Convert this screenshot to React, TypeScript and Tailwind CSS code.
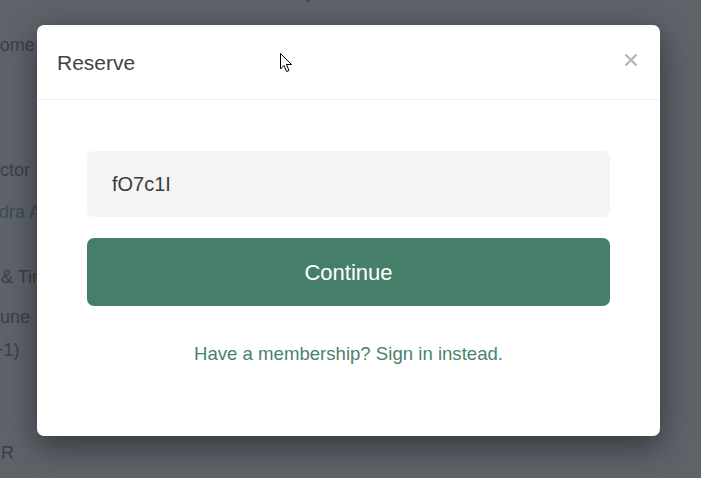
import React from "react";

export default function App() {
  const font = { fontFamily: '"Liberation Sans", Arial, sans-serif' };
  return (
    <div
      className="relative w-[701px] h-[478px] overflow-hidden bg-[#5e6269]"
      style={font}
    >
      {/* dimmed page behind the modal */}
      <div className="flex flex-col text-[18px] leading-[22px] text-[#3b3f44]">
        <div className="mt-[-19px] ml-[296px] h-[22px]">by</div>
        <div className="mt-[31px] ml-[-40px]">Welcome</div>
        <div className="mt-[103px] ml-[-45px]">Instructor</div>
        <div className="mt-[20px] ml-[-56px] text-[#3c4f51]">Alexandra A</div>
        <div className="mt-[43px] ml-[-42px]">Date &amp; Time</div>
        <div className="mt-[18px] ml-[-9px]">June</div>
        <div className="mt-[11px] ml-[-13px]">(+1)</div>
        <div className="mt-[81px] ml-[-24px]">EUR</div>
      </div>

      {/* modal */}
      <div className="absolute left-[37px] top-[25px] w-[623px] h-[411px] bg-white rounded-[7px] shadow-[0_10px_30px_rgba(0,0,0,0.45)] flex flex-col">
        <div className="h-[75px] flex items-center justify-between pl-[20px] pr-[22px] border-b border-[#eef1f5]">
          <span className="text-[21px] text-[#3e4248] mt-[1px]">Reserve</span>
          <svg width="14" height="14" viewBox="0 0 14 14" className="mt-[-4px]">
            <path d="M1.5 1.5 L12.5 12.5 M12.5 1.5 L1.5 12.5" stroke="#b2b8bf" strokeWidth="2.4" strokeLinecap="butt" />
          </svg>
        </div>
        <div className="flex flex-col px-[50px] pt-[51px]">
          <div className="h-[66px] rounded-[7px] bg-[#f4f4f4] flex items-center pl-[25px] text-[20px] text-[#3c3c3c]">
            fO7c1I
          </div>
          <button className="mt-[21px] h-[68px] rounded-[7px] bg-[#457f69] text-white text-[22px] flex items-center justify-center">
            Continue
          </button>
          <div className="mt-[34px] text-center text-[18.6px] text-[#4a836d]">
            Have a membership? Sign in instead.
          </div>
        </div>
      </div>

      {/* mouse cursor */}
      <svg
        className="absolute left-[280px] top-[53px]"
        width="13"
        height="20"
        viewBox="0 0 13 20"
      >
        <path
          d="M0.5 0.5 L0.5 16 L4 12.5 L6.5 18.5 L9 17.5 L6.5 11.5 L11.5 11.5 Z"
          fill="white"
          stroke="black"
          strokeWidth="1"
          strokeLinejoin="miter"
        />
      </svg>
    </div>
  );
}
